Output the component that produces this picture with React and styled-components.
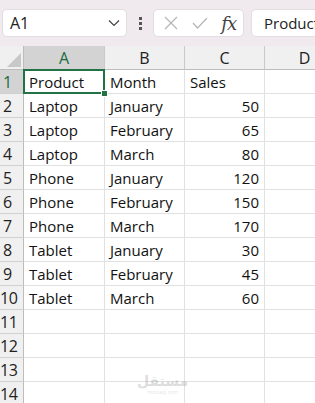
import React from "react";
import styled, { createGlobalStyle } from "styled-components";

const GlobalStyle = createGlobalStyle`
  body {
    margin: 0;
    font-family: "Open Sans", "Noto Sans", sans-serif;
    background: #ffffff;
    overflow: hidden;
  }
`;

const Page = styled.div`
  width: 315px;
  height: 403px;
  overflow: hidden;
  position: relative;
`;

const Toolbar = styled.div`
  height: 46px;
  background: #f0eaee;
  display: flex;
  align-items: center;
  padding-left: 2px;
  box-sizing: border-box;
  white-space: nowrap;
  overflow: hidden;
`;

const Box = styled.div`
  height: 28px;
  background: #ffffff;
  border: 1px solid #e3dde1;
  border-radius: 5px;
  box-sizing: border-box;
  display: flex;
  align-items: center;
  flex-shrink: 0;
  overflow: hidden;
  width: ${(p) => p.$width}px;
  margin-right: ${(p) => p.$gap || 0}px;
`;

const NameText = styled.span`
  font-size: 16px;
  color: #222;
  padding-left: 7px;
  flex: 1;
`;

const Chevron = styled.svg`
  margin-right: 6px;
`;

const Dots = styled.div`
  width: 26px;
  display: flex;
  flex-direction: column;
  align-items: center;
  gap: 2px;
  flex-shrink: 0;

  span {
    width: 3px;
    height: 3px;
    background: #555;
  }
`;

const IconSlot = styled.div`
  width: 29px;
  display: flex;
  justify-content: center;
  align-items: center;
`;

const Fx = styled.span`
  font-family: "DejaVu Serif", "Liberation Serif", serif;
  font-style: italic;
  font-size: 18px;
  color: #444;
  letter-spacing: -1px;
`;

const FormulaText = styled.span`
  font-size: 15px;
  color: #222;
  padding-left: 12px;
`;

const Grid = styled.div`
  display: grid;
  grid-template-columns: 24px 81px 80px 80px 80px;
  grid-auto-rows: 24px;
`;

const Cell = styled.div`
  box-sizing: border-box;
  border-right: 1px solid #e1e1e1;
  border-bottom: 1px solid #e1e1e1;
  font-size: 15px;
  color: #111;
  display: flex;
  align-items: center;
  justify-content: ${(p) => (p.$num ? "flex-end" : "flex-start")};
  padding: ${(p) => (p.$num ? "0 5px 0 0" : "0 0 0 5px")};
  white-space: nowrap;
  overflow: visible;
`;

const ColHead = styled.div`
  box-sizing: border-box;
  background: ${(p) => (p.$active ? "#d3d3d3" : "#f0f0f0")};
  border-right: 1px solid #c9c9c9;
  border-bottom: 1px solid #bdbdbd;
  font-size: 16px;
  color: ${(p) => (p.$active ? "#1c6b3f" : "#222")};
  display: flex;
  align-items: center;
  justify-content: center;
`;

const Corner = styled.div`
  box-sizing: border-box;
  background: #f0f0f0;
  border-right: 1px solid #bdbdbd;
  border-bottom: 1px solid #bdbdbd;
  display: flex;
  align-items: flex-end;
  justify-content: flex-end;
  padding: 0 2px 2px 0;
`;

const RowHead = styled.div`
  box-sizing: border-box;
  background: ${(p) => (p.$active ? "#d3d3d3" : "#f0f0f0")};
  border-right: 1px solid #bdbdbd;
  border-bottom: 1px solid #d0d0d0;
  font-size: 16px;
  color: ${(p) => (p.$active ? "#1c6b3f" : "#222")};
  display: flex;
  align-items: center;
  padding-left: ${(p) => (p.$wide ? 0 : 3)}px;
  letter-spacing: -0.5px;
`;

const ActiveCell = styled(Cell)`
  position: relative;
  border: none;
  box-shadow: inset 0 0 0 2px #217346;
  margin: -1px 0 0 -1px;
  width: calc(100% + 1px);
  height: calc(100% + 1px);
  padding-left: 6px;
  padding-top: 1px;

  &::after {
    content: "";
    position: absolute;
    right: -3px;
    bottom: -3px;
    width: 5px;
    height: 5px;
    background: #217346;
    border: 1px solid #fff;
  }
`;

const Watermark = styled.div`
  position: absolute;
  left: 137px;
  top: 374px;
  display: flex;
  flex-direction: column;
  align-items: center;
  gap: 2px;
  color: rgba(120, 120, 120, 0.25);

  b {
    font-family: "DejaVu Sans", sans-serif;
    font-size: 14px;
    line-height: 14px;
  }
  small {
    font-size: 5px;
    line-height: 5px;
  }
`;

const rows = [
  ["Product", "Month", "Sales"],
  ["Laptop", "January", 50],
  ["Laptop", "February", 65],
  ["Laptop", "March", 80],
  ["Phone", "January", 120],
  ["Phone", "February", 150],
  ["Phone", "March", 170],
  ["Tablet", "January", 30],
  ["Tablet", "February", 45],
  ["Tablet", "March", 60],
  ["", "", ""],
  ["", "", ""],
  ["", "", ""],
  ["", "", ""],
];

function App() {
  return (
    <Page>
      <GlobalStyle />
      <Toolbar>
        <Box $width={125}>
          <NameText>A1</NameText>
          <Chevron width="12" height="8" viewBox="0 0 12 8">
            <path d="M1 1.5 L6 6.5 L11 1.5" fill="none" stroke="#444" strokeWidth="1.2" />
          </Chevron>
        </Box>
        <Dots>
          <span />
          <span />
          <span />
        </Dots>
        <Box $width={91} $gap={7}>
          <IconSlot style={{ marginLeft: 3 }}>
            <svg width="14" height="14" viewBox="0 0 14 14">
              <path d="M1 1 L13 13 M13 1 L1 13" stroke="#b5b5b5" strokeWidth="1.2" />
            </svg>
          </IconSlot>
          <IconSlot>
            <svg width="16" height="12" viewBox="0 0 16 12">
              <path d="M1 6 L5.5 11 L15 1" fill="none" stroke="#b5b5b5" strokeWidth="1.2" />
            </svg>
          </IconSlot>
          <IconSlot>
            <Fx>fx</Fx>
          </IconSlot>
        </Box>
        <Box $width={100}>
          <FormulaText>Product</FormulaText>
        </Box>
      </Toolbar>
      <Grid>
        <Corner>
          <svg width="14" height="14" viewBox="0 0 14 14">
            <path d="M14 0 L14 14 L0 14 Z" fill="#c8c8c8" />
          </svg>
        </Corner>
        {["A", "B", "C", "D"].map((c) => (
          <ColHead key={c} $active={c === "A"}>
            {c}
          </ColHead>
        ))}
        {rows.map((r, i) => (
          <React.Fragment key={i}>
            <RowHead $active={i === 0} $wide={i >= 9}>
              {i + 1}
            </RowHead>
            {i === 0 ? <ActiveCell>{r[0]}</ActiveCell> : <Cell>{r[0]}</Cell>}
            <Cell>{r[1]}</Cell>
            <Cell $num={typeof r[2] === "number"}>{r[2]}</Cell>
            <Cell />
          </React.Fragment>
        ))}
      </Grid>
      <Watermark>
        <b>مستقل</b>
        <small>mostaql.com</small>
      </Watermark>
    </Page>
  );
}

export default App;
